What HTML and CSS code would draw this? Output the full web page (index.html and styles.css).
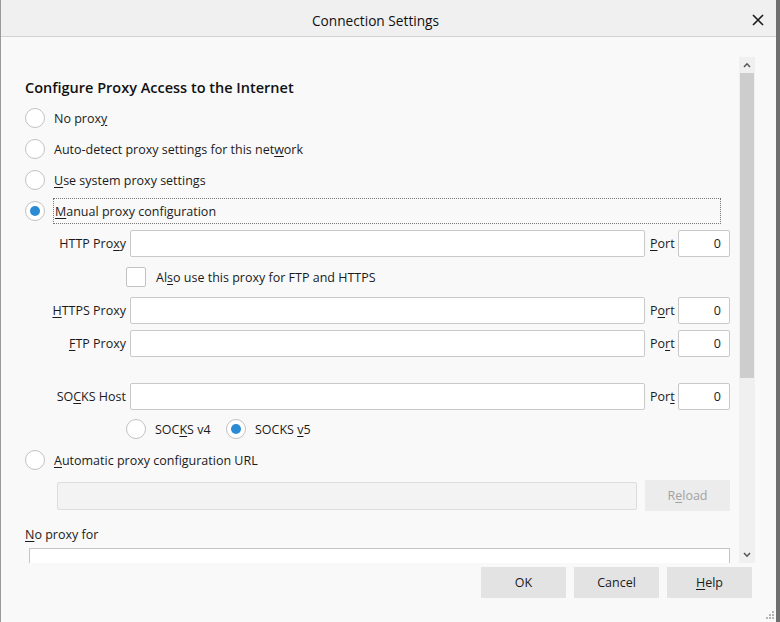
FILE: index.html
```html
<!DOCTYPE html>
<html>
<head>
<meta charset="utf-8">
<link rel="stylesheet" href="styles.css">
</head>
<body>
<div class="window">
  <div class="titlebar">
    <span class="tb-side"></span>
    <div class="title">Connection Settings</div>
    <div class="tb-side tb-right">
      <svg class="close" width="12" height="12" viewBox="0 0 12 12"><path d="M1 1L11 11M11 1L1 11" stroke="#1a1a1a" stroke-width="1.6" fill="none"/></svg>
    </div>
  </div>
  <div class="main">
    <div class="viewport">
      <div class="content">
        <div class="heading">Configure Proxy Access to the Internet</div>
        <div class="opt r1"><span class="radio"></span><span class="lbl">No prox<u>y</u></span></div>
        <div class="opt r2"><span class="radio"></span><span class="lbl">Auto-detect proxy settings for this net<u>w</u>ork</span></div>
        <div class="opt r3"><span class="radio"></span><span class="lbl"><u>U</u>se system proxy settings</span></div>
        <div class="opt r4"><span class="radio checked"></span><span class="lbl focus"><u>M</u>anual proxy configuration</span></div>

        <div class="field f-http">
          <span class="flabel">HTTP Pro<u>x</u>y</span>
          <span class="input grow"></span>
          <span class="port"><u>P</u>ort</span>
          <span class="input num">0</span>
        </div>
        <div class="checkrow">
          <span class="checkbox"></span><span class="lbl">Al<u>s</u>o use this proxy for FTP and HTTPS</span>
        </div>
        <div class="field f-https">
          <span class="flabel"><u>H</u>TTPS Proxy</span>
          <span class="input grow"></span>
          <span class="port">P<u>o</u>rt</span>
          <span class="input num">0</span>
        </div>
        <div class="field f-ftp">
          <span class="flabel"><u>F</u>TP Proxy</span>
          <span class="input grow"></span>
          <span class="port">Po<u>r</u>t</span>
          <span class="input num">0</span>
        </div>
        <div class="field f-socks">
          <span class="flabel">SO<u>C</u>KS Host</span>
          <span class="input grow"></span>
          <span class="port">Por<u>t</u></span>
          <span class="input num">0</span>
        </div>
        <div class="socksver">
          <div class="sv sv4"><span class="radio"></span><span class="lbl">SOC<u>K</u>S v4</span></div>
          <div class="sv"><span class="radio checked"></span><span class="lbl">SOCKS <u>v</u>5</span></div>
        </div>
        <div class="opt r5"><span class="radio"></span><span class="lbl"><u>A</u>utomatic proxy configuration URL</span></div>
        <div class="urlrow">
          <span class="input disabled grow"></span>
          <span class="btn reload">R<u>e</u>load</span>
        </div>
        <div class="noproxy"><u>N</u>o proxy for</div>
        <div class="textarea"></div>
      </div>
      <div class="scrollbar">
        <div class="sb-arrow sb-up">
          <svg width="8" height="6" viewBox="0 0 8 6"><path d="M1 5L4 1.8L7 5" stroke="#555" stroke-width="1.5" fill="none"/></svg>
        </div>
        <div class="sb-thumb"></div>
        <div class="sb-track"></div>
        <div class="sb-arrow sb-down">
          <svg width="8" height="6" viewBox="0 0 8 6"><path d="M1 1L4 4.2L7 1" stroke="#555" stroke-width="1.5" fill="none"/></svg>
        </div>
      </div>
    </div>
    <div class="footer">
      <span class="btn">OK</span>
      <span class="btn">Cancel</span>
      <span class="btn"><u>H</u>elp</span>
    </div>
    <svg class="grip" width="10" height="10" viewBox="0 0 10 10">
      <rect x="7" y="1" width="2" height="2" fill="#b5b5b5"/>
      <rect x="4" y="4" width="2" height="2" fill="#b5b5b5"/>
      <rect x="7" y="4" width="2" height="2" fill="#b5b5b5"/>
      <rect x="1" y="7" width="2" height="2" fill="#b5b5b5"/>
      <rect x="4" y="7" width="2" height="2" fill="#b5b5b5"/>
      <rect x="7" y="7" width="2" height="2" fill="#b5b5b5"/>
    </svg>
  </div>
</div>
</body>
</html>
```

FILE: styles.css
```css
* { box-sizing: border-box; }
html, body { margin: 0; padding: 0; }
body {
  width: 780px;
  height: 622px;
  overflow: hidden;
  font-family: "Open Sans", "Noto Sans", sans-serif;
  font-size: 12.5px;
  color: #1b1b1b;
  background: #f9f9f9;
}
u { text-decoration: underline; text-underline-offset: 2px; text-decoration-thickness: 1px; }

.window {
  width: 780px;
  height: 622px;
  display: flex;
  flex-direction: column;
  border-left: 1px solid #9a9a9a;
  border-right: 4px solid #6f6f6f;
  background: #f9f9f9;
}

.titlebar {
  height: 37px;
  flex: none;
  background: #f0f0f0;
  border-bottom: 1px solid #d3d3d3;
  display: grid;
  grid-template-columns: 1fr auto 1fr;
  align-items: center;
  padding-right: 26px;
}
.title { font-size: 13.7px; color: #111; padding-top: 4px; }
.tb-right { display: flex; justify-content: flex-end; }
.close { margin-right: -14px; margin-top: 3px; }

.main {
  flex: 1;
  position: relative;
  display: flex;
  flex-direction: column;
  padding: 20px 21px 0 0;
}
.viewport {
  height: 506px;
  display: flex;
  overflow: hidden;
}
.content {
  flex: 1;
  overflow: hidden;
  padding: 21px 9px 0 24px;
}
.heading {
  font-size: 14.5px;
  font-weight: 600;
  line-height: 20px;
  height: 20px;
  color: #111;
}

.opt { display: flex; align-items: center; height: 20px; }
.r1 { margin-top: 10px; }
.r2 { margin-top: 11px; }
.r3 { margin-top: 11px; }
.r4 { margin-top: 8px; height: 26px; }
.r5 { margin-top: 11px; }

.radio {
  flex: none;
  width: 20px;
  height: 20px;
  border-radius: 50%;
  border: 1px solid #c2c2c2;
  background: #fff;
  display: flex;
  align-items: center;
  justify-content: center;
}
.radio.checked::after {
  content: "";
  width: 10px;
  height: 10px;
  border-radius: 50%;
  background: #2a8ad4;
}
.opt .lbl { margin-left: 9px; }
.opt .focus {
  margin-left: 8px;
  padding-left: 1px;
  flex: 1;
  height: 26px;
  display: flex;
  align-items: center;
  border: 1px dotted #777;
  margin-right: 9px;
}

.field {
  display: flex;
  align-items: center;
  height: 27px;
}
.f-http { margin-top: 6px; }
.f-https { margin-top: 10px; }
.f-ftp { margin-top: 6px; }
.f-socks { margin-top: 26px; }
.flabel { width: 101px; text-align: right; flex: none; }
.input {
  height: 27px;
  border: 1px solid #c9c9c9;
  border-radius: 2px;
  background: #fff;
}
.grow { flex: 1; margin-left: 4px; }
.port { margin: 0 4px 0 5px; width: 24px; flex: none; white-space: nowrap; }
.num {
  width: 52px;
  flex: none;
  display: flex;
  align-items: center;
  justify-content: flex-end;
  padding-right: 8px;
}

.checkrow {
  margin-top: 10px;
  height: 20px;
  display: flex;
  align-items: center;
  padding-left: 101px;
}
.checkbox {
  width: 20px;
  height: 20px;
  border: 1px solid #c2c2c2;
  border-radius: 2px;
  background: #fff;
  flex: none;
}
.checkrow .lbl { margin-left: 10px; }

.socksver {
  margin-top: 9px;
  height: 20px;
  display: flex;
  padding-left: 101px;
}
.sv { display: flex; align-items: center; }
.sv4 { width: 100px; }
.sv .lbl { margin-left: 9px; }

.urlrow {
  margin-top: 10px;
  height: 31px;
  display: flex;
  align-items: center;
  padding-left: 32px;
}
.urlrow .grow { margin-left: 0; height: 28px; }
.disabled { background: #f3f3f3; border-color: #dcdcdc; }
.btn {
  width: 85px;
  height: 31px;
  display: flex;
  align-items: center;
  justify-content: center;
  background: #e3e3e3;
  flex: none;
}
.reload { margin-left: 8px; background: #ececec; color: #a2a2a2; }

.noproxy { margin-top: 16px; line-height: 16px; height: 16px; }
.textarea {
  margin: 5px 0 0 4px;
  height: 40px;
  border: 1px solid #c4c4c4;
  background: #fff;
}

.scrollbar {
  width: 16px;
  flex: none;
  display: flex;
  flex-direction: column;
  background: #f0f0f0;
}
.sb-arrow {
  height: 16px;
  display: flex;
  align-items: center;
  justify-content: center;
  flex: none;
}
.sb-thumb { height: 305px; background: #cdcdcd; margin: 0 1px; flex: none; }
.sb-track { flex: 1; }

.footer {
  display: flex;
  justify-content: flex-end;
  gap: 8px;
  margin-top: 4px;
  padding-right: 3px;
}
.grip { position: absolute; right: 1px; bottom: 2px; }
```
